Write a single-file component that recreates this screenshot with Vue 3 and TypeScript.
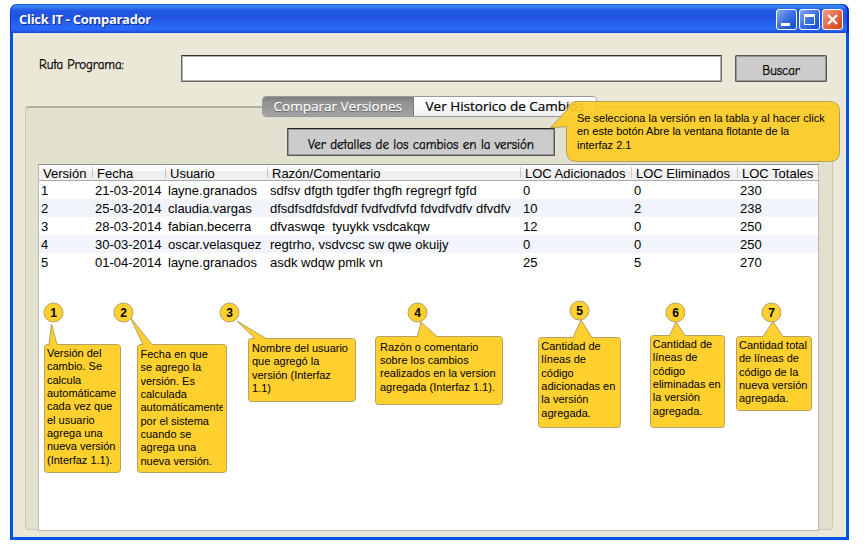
<script setup lang="ts">
interface Callout {
  id: number
  cx: number
  cy: number
  x: number
  y: number
  w: number
  h: number
  tip: [number, number]
  base: [number, number]
  tx: number
  ty: number
  lines: string[]
}

const headers: string[] = ['Versión', 'Fecha', 'Usuario', 'Razón/Comentario', 'LOC Adicionados', 'LOC Eliminados', 'LOC Totales']

const rows: string[][] = [
  ['1', '21-03-2014', 'layne.granados', 'sdfsv dfgth tgdfer thgfh regregrf fgfd', '0', '0', '230'],
  ['2', '25-03-2014', 'claudia.vargas', 'dfsdfsdfdsfdvdf fvdfvdfvfd fdvdfvdfv dfvdfv', '10', '2', '238'],
  ['3', '28-03-2014', 'fabian.becerra', 'dfvaswqe  tyuykk vsdcakqw', '12', '0', '250'],
  ['4', '30-03-2014', 'oscar.velasquez', 'regtrho, vsdvcsc sw qwe okuijy', '0', '0', '250'],
  ['5', '01-04-2014', 'layne.granados', 'asdk wdqw pmlk vn', '25', '5', '270'],
]

const callouts: Callout[] = [
  { id: 1, cx: 53.5, cy: 312.5, x: 44.5, y: 344.5, w: 76, h: 128, tip: [51.5, 324], base: [49, 57], tx: 47, ty: 347,
    lines: ['Versión del', 'cambio. Se', 'calcula', 'automáticame', 'cada vez que', 'el usuario', 'agrega una', 'nueva versión', '(Interfaz 1.1).'] },
  { id: 2, cx: 123.5, cy: 312.5, x: 137.5, y: 344.5, w: 89, h: 128, tip: [130, 317], base: [143, 152], tx: 140.5, ty: 347.9,
    lines: ['Fecha en que', 'se agrego la', 'versión. Es', 'calculada', 'automáticamente', 'por el sistema', 'cuando se', 'agrega una', 'nueva versión.'] },
  { id: 3, cx: 229.5, cy: 312.5, x: 248.5, y: 338.5, w: 107, h: 63, tip: [237, 321], base: [255, 266], tx: 252, ty: 342,
    lines: ['Nombre del usuario', 'que agregó la', 'versión (Interfaz', '1.1)'] },
  { id: 4, cx: 417.5, cy: 312.5, x: 375.5, y: 336.5, w: 127, h: 68, tip: [421, 322], base: [417.5, 437], tx: 380, ty: 340.5,
    lines: ['Razón o comentario', 'sobre los cambios', 'realizados en la version', 'agregada (Interfaz 1.1).'] },
  { id: 5, cx: 579.5, cy: 310.5, x: 538.5, y: 337.5, w: 82, h: 90, tip: [581, 320], base: [573, 592], tx: 541.3, ty: 340,
    lines: ['Cantidad de', 'líneas de', 'código', 'adicionadas en', 'la versión', 'agregada.'] },
  { id: 6, cx: 675.5, cy: 312.5, x: 650.5, y: 335.5, w: 74, h: 92, tip: [676, 322], base: [669.5, 685], tx: 652.8, ty: 338,
    lines: ['Cantidad de', 'líneas de', 'código', 'eliminadas en', 'la versión', 'agregada.'] },
  { id: 7, cx: 771.5, cy: 312.5, x: 736.5, y: 336.5, w: 75, h: 74, tip: [773, 321.5], base: [763, 783], tx: 739, ty: 339,
    lines: ['Cantidad total', 'de líneas de', 'código de la', 'nueva versión', 'agregada.'] },
]

const note: string[] = [
  'Se selecciona la versión en la tabla y al hacer click',
  'en este botón Abre la ventana flotante de la',
  'interfaz 2.1',
]

function bubble(c: Callout): string {
  const r = 3
  const right = c.x + c.w
  const bottom = c.y + c.h
  return `M${c.x + r} ${c.y}H${c.base[0]}L${c.tip[0]} ${c.tip[1]}L${c.base[1]} ${c.y}H${right - r}Q${right} ${c.y} ${right} ${c.y + r}V${bottom - r}Q${right} ${bottom} ${right - r} ${bottom}H${c.x + r}Q${c.x} ${bottom} ${c.x} ${bottom - r}V${c.y + r}Q${c.x} ${c.y} ${c.x + r} ${c.y}Z`
}
</script>

<template>
  <div class="page">
    <div class="window">
      <header class="titlebar">
        <span class="title">Click IT - Comparador</span>
        <div class="controls">
          <svg class="ctl" viewBox="0 0 21 21"><rect class="blue" x=".5" y=".5" width="20" height="20" rx="2.5" /><path class="fill" d="M5 14h9v3H5z" /></svg>
          <svg class="ctl" viewBox="0 0 21 21"><rect class="blue" x=".5" y=".5" width="20" height="20" rx="2.5" /><path class="fill" fill-rule="evenodd" d="M5 5h11v11H5zM6 8v7h9V8z" /></svg>
          <svg class="ctl" viewBox="0 0 21 21"><rect class="red" x=".5" y=".5" width="20" height="20" rx="2.5" /><path class="cross" d="M6 6l9 9M15 6l-9 9" /></svg>
          <svg class="defs" width="0" height="0">
            <defs>
              <linearGradient id="gb" x1="0" y1="0" x2="1" y2="1"><stop offset="0" stop-color="#8cabf4" /><stop offset=".5" stop-color="#3d70e0" /><stop offset="1" stop-color="#0b48d0" /></linearGradient>
              <linearGradient id="gr" x1="0" y1="0" x2="1" y2="1"><stop offset="0" stop-color="#f0a38c" /><stop offset=".5" stop-color="#e46a48" /><stop offset="1" stop-color="#d8400c" /></linearGradient>
            </defs>
          </svg>
        </div>
      </header>
      <main class="body">
        <div class="search">
          <label class="label hand">Ruta Programa:</label>
          <div class="field"></div>
          <button class="sketch buscar"><span class="hand">Buscar</span></button>
        </div>
        <section class="group">
          <nav class="tabs">
            <div class="tab on"><span>Comparar Versiones</span></div>
            <div class="tab"><span>Ver Historico de Cambios</span></div>
          </nav>
          <button class="sketch details"><span class="hand">Ver detalles de los cambios en la versión</span></button>
          <div class="table">
            <div class="row head">
              <div v-for="h in headers" :key="h" class="cell">{{ h }}</div>
            </div>
            <div v-for="r in rows" :key="r[0]" class="row data">
              <div v-for="(c, i) in r" :key="i" class="cell">{{ c }}</div>
            </div>
          </div>
        </section>
      </main>
    </div>

    <svg class="overlay" viewBox="0 0 868 545">
      <path class="note-shape" d="M576.5 101.5H829.5Q839.5 101.5 839.5 111.5V151.5Q839.5 161.5 829.5 161.5H576.5Q566.5 161.5 566.5 151.5V126.5L550.5 127.8L567.5 109.5Q569 102 576.5 101.5Z" />
      <path v-for="c in callouts" :key="c.id" class="shape" :d="bubble(c)" />
      <circle v-for="c in callouts" :key="c.id" class="shape" :cx="c.cx" :cy="c.cy" r="9.5" />
    </svg>
    <div class="note text"><div v-for="l in note" :key="l">{{ l }}</div></div>
    <template v-for="c in callouts" :key="c.id">
      <div class="num" :style="{ left: c.cx - 10 + 'px', top: c.cy - 10 + 'px' }">{{ c.id }}</div>
      <div class="text" :style="{ left: c.tx + 'px', top: c.ty + 'px', width: c.x + c.w - 3.5 - c.tx + 'px' }">
        <div v-for="l in c.lines" :key="l">{{ l }}</div>
      </div>
    </template>
  </div>
</template>

<style>
body { background: #fff; }
</style>

<style scoped>
.page { position: relative; box-sizing: border-box; width: 868px; height: 545px; padding: 4px 19px 5px 10px; overflow: hidden; font-family: "Liberation Sans", Arial, sans-serif; color: #000; }
.window { display: flex; flex-direction: column; height: 536px; }
.titlebar { box-sizing: border-box; display: flex; align-items: center; justify-content: space-between; height: 29px; padding: 2px 6px 0 9px; border-radius: 7px 7px 0 0; background: linear-gradient(#1a50d8 0, #3f8cf8 2px, #2f70f0 4px, #2258e2 7px, #2152df 13px, #2868f6 23px, #2a66f8 26px, #1c46cc 29px); box-shadow: inset 1px 0 #1238c4, inset -2px 0 #1026b8; }
.title { font: bold 13px "Open Sans", sans-serif; color: #fff; text-shadow: 1px 1px #0c2c90; white-space: nowrap; letter-spacing: -0.3px; padding-bottom: 1px; }
.controls { display: flex; gap: 2px; }
.ctl { display: block; width: 21px; height: 21px; }
.defs { position: absolute; }
.blue { fill: url(#gb); stroke: #fff; }
.red { fill: url(#gr); stroke: #fff; }
.fill { fill: #fff; }
.cross { stroke: #fff; stroke-width: 2.4; fill: none; }
.body { box-sizing: border-box; flex: 1; padding: 22px 13px 7px 12px; border: 3px solid #0054e3; border-top: 0; background: #ebe8d8; }
.search { display: flex; align-items: flex-start; height: 51px; }
.hand { font: 13px "Comic Sans MS", "Comic Neue", "Noto Sans", sans-serif; white-space: nowrap; -webkit-text-stroke: 0.25px #000; }
.label { box-sizing: border-box; width: 156px; padding: 2px 0 0 14px; letter-spacing: -0.1px; }
.field { box-sizing: border-box; width: 541px; height: 27px; border: 1px solid #686868; border-top-color: #333; border-radius: 1px; background: #fff; box-shadow: inset 0 0 0 1px #b0b0b0; }
.sketch { box-sizing: border-box; display: flex; align-items: center; justify-content: center; padding: 4px 0 0; border: 1px solid #5c5959; border-radius: 1px; background: #ccc; color: #000; box-shadow: inset 0 0 0 1px #959393; }
.buscar { width: 92px; height: 27px; margin-left: 13px; }
.buscar .hand { letter-spacing: -0.1px; }
.group { box-sizing: border-box; display: flex; flex-direction: column; height: 424px; border: 1px solid #c9c8b8; border-top: 2px solid #b2b1a3; border-radius: 4px; background: #e2e1d0; padding: 0 14px 0 12px; }
.tabs { box-sizing: border-box; display: flex; align-self: flex-start; width: 335px; height: 21px; margin: -12px 0 0 224px; border: 1px solid #999; border-radius: 4px; overflow: hidden; flex: none; }
.tab { box-sizing: border-box; display: flex; align-items: center; justify-content: center; width: 183px; padding-bottom: 1px; background: linear-gradient(#fff, #f8f8f8 60%, #ededed); font: 13.5px "Open Sans", sans-serif; white-space: nowrap; -webkit-text-stroke: 0.2px currentColor; }
.tab.on { width: 151px; color: #fff; background: linear-gradient(#7d7d7d, #929292 30%, #a2a2a2); text-shadow: 0 1px 1px #555; border-right: 1px solid #777; }
.details { flex: none; align-self: flex-start; width: 268px; height: 28px; margin: 11px 0 0 249px; border-top-color: #222; }
.table { box-sizing: border-box; flex: none; width: 781px; height: 367px; margin-top: 8px; border: 1px solid #b8b8b8; border-top-color: #8e8e8e; background: #fff; }
.row { display: grid; grid-template-columns: 54px 73px 102px 253px 111px 106px 80px; height: 18px; font-size: 13px; line-height: 18px; white-space: pre; }
.cell { padding-left: 2px; }
.data .cell { line-height: 20px; }
.head { box-sizing: border-box; height: 16px; border-bottom: 1px solid #aaa; background: linear-gradient(#fff 0, #f8f8f8 6px, #ececec 7px, #f3f3f3 15px); }
.head .cell { height: 11px; margin-top: 2px; line-height: 13px; padding-left: 4px; border-right: 1px solid #c8c8c8; }
.head .cell:last-child { border-right: 0; }
.data:nth-child(odd) { background: #f1f5fb; }
.overlay { position: absolute; left: 0; top: 0; width: 868px; height: 545px; }
.shape { fill: #ffd02e; stroke: #b3a164; stroke-width: 1; }
.note-shape { fill: #ffcc20; fill-opacity: .9; stroke: #b3a05a; }
.text { position: absolute; overflow: hidden; font-size: 11px; line-height: 13.35px; white-space: pre; }
.note { left: 577px; top: 112px; width: 256px; }
.num { position: absolute; width: 20px; height: 20px; line-height: 20px; text-align: center; font-weight: bold; font-size: 12px; }
</style>
